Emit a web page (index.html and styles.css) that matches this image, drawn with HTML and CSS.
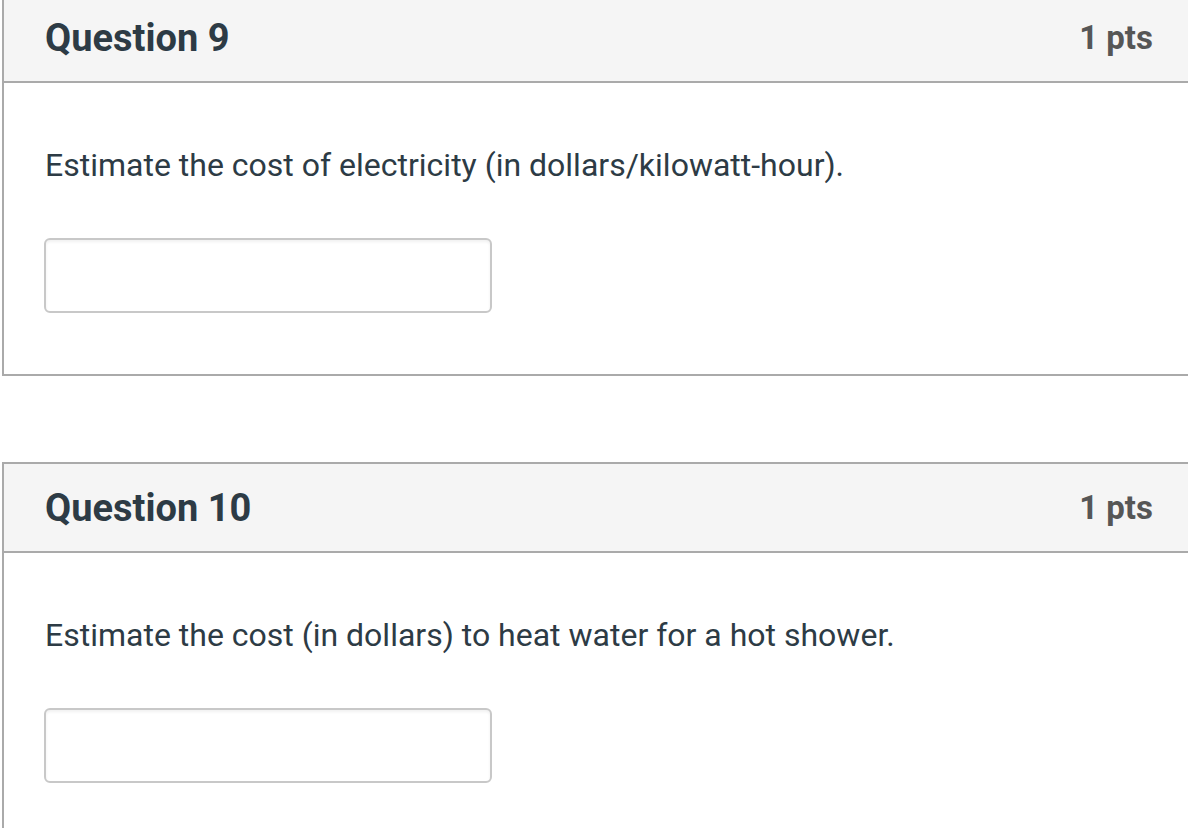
FILE: index.html
```html
<!DOCTYPE html>
<html lang="en">
<head>
<meta charset="utf-8">
<title>Quiz</title>
<link rel="stylesheet" href="styles.css">
</head>
<body>
<div class="page">
  <section class="question">
    <header class="q-header">
      <h2 class="q-name">Question 9</h2>
      <span class="q-points">1 pts</span>
    </header>
    <div class="q-body">
      <p class="q-text">Estimate the cost of electricity (in dollars/kilowatt-hour).</p>
      <input class="q-input" type="text" aria-label="Answer">
    </div>
  </section>
  <section class="question">
    <header class="q-header">
      <h2 class="q-name">Question 10</h2>
      <span class="q-points">1 pts</span>
    </header>
    <div class="q-body">
      <p class="q-text">Estimate the cost (in dollars) to heat water for a hot shower.</p>
      <input class="q-input" type="text" aria-label="Answer">
    </div>
  </section>
</div>
</body>
</html>
```

FILE: styles.css
```css
html, body {
  margin: 0;
  padding: 0;
  background: #ffffff;
  overflow: hidden;
}
body {
  font-family: Roboto, "Liberation Sans", Arial, sans-serif;
  color: #2d3b45;
}
.page {
  margin-top: -8px;
  padding-left: 2px;
  display: flex;
  flex-direction: column;
  gap: 86px;
  width: 1196px;
}
.question {
  border: 2px solid #aaaaaa;
  box-sizing: border-box;
  width: 1196px;
}
.q-header {
  background: #f5f5f5;
  border-bottom: 2px solid #aaaaaa;
  height: 87px;
  display: flex;
  align-items: center;
  justify-content: space-between;
  padding: 0 43px 0 41px;
}
.q-name {
  margin: 0;
  font-size: 38px;
  font-weight: 700;
  color: #2d3b45;
}
.q-points {
  font-size: 33px;
  font-weight: 700;
  color: #565656;
}
.q-body {
  padding: 62px 41px 61px 40px;
}
.q-text {
  margin: 0 0 0 1px;
  font-size: 32px;
  line-height: 40px;
  color: #2d3b45;
}
.q-input {
  display: block;
  margin-top: 53px;
  width: 448px;
  height: 75px;
  box-sizing: border-box;
  border: 2px solid #c8c8c8;
  border-radius: 6px;
  box-shadow: inset 0 2px 3px rgba(0,0,0,0.06);
  background: #fff;
}
```
